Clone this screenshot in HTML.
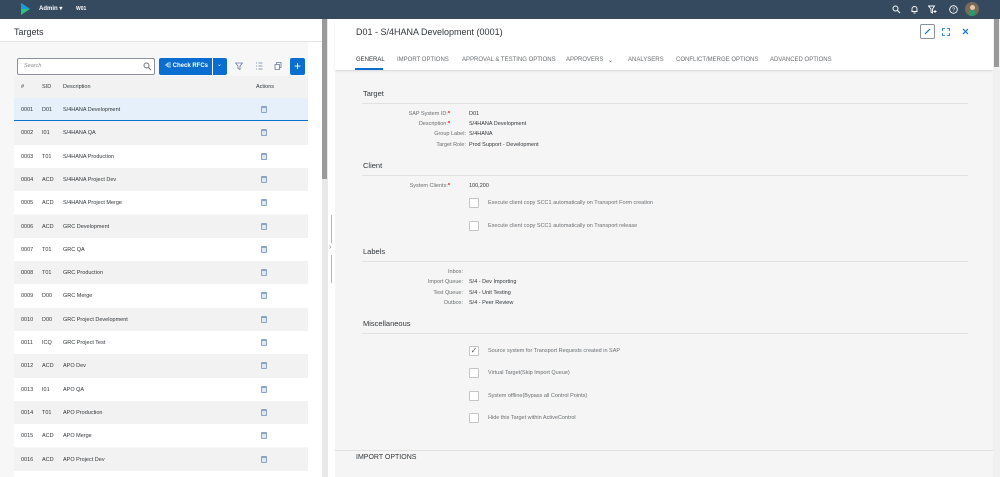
<!DOCTYPE html>
<html><head><meta charset="utf-8"><style>
*{margin:0;padding:0;box-sizing:border-box}
html{width:1000px;height:477px;overflow:hidden}
body{width:1000px;height:477px;overflow:hidden;font-family:"Liberation Sans",sans-serif;background:#f7f7f7;position:relative;color:#32363a}
.a{position:absolute}
.top{left:0;top:0;width:1000px;height:19px;background:#354a5f}
.row{position:absolute;left:14px;width:294px;height:23.3px;font-size:5.5px;color:#32363a}
.row span{position:absolute;top:9px}
.trash{position:absolute;left:247px;top:8px;width:6px;height:7px;border:1px solid #8aa4c4;border-top-width:2px;border-radius:1px;background:#dfe8f2}
.lbl{position:absolute;font-size:5.5px;color:#6a6d70;text-align:right;width:120px;left:330px}
.val{position:absolute;font-size:5.5px;color:#32363a;left:469px}
.sec{position:absolute;left:363px;font-size:7.5px;color:#32363a}
.hr{position:absolute;left:362px;width:606px;height:1px;background:#e1e1e1}
.cb{position:absolute;left:469px;width:10px;height:10px;border:1px solid #c5c5c5;background:#fff;border-radius:1px}
.cbl{position:absolute;left:488px;font-size:5.5px;color:#6a6d70}
.tab{position:absolute;top:57px;font-size:6px;color:#6a6d70;white-space:nowrap}
.ic{position:absolute;top:4px;font-size:8px;color:#fff}
</style></head><body>
<div class="a top"></div>
<svg class="a" style="left:21px;top:3px" width="9" height="12" viewBox="0 0 9 12"><path d="M0 0 L9 6 L0 12Z" fill="#2ec27e"/><path d="M0 0 L9 6 L0 6Z" fill="#1d9bd8"/></svg>
<div class="a" style="left:39px;top:5px;font-size:6px;font-weight:bold;color:#fff">Admin ▾</div>
<div class="a" style="left:76px;top:6px;font-size:5px;font-weight:bold;color:#fff">W01</div>
<svg class="a" style="left:892px;top:5px" width="9" height="9" viewBox="0 0 9 9"><circle cx="3.5" cy="3.5" r="2.5" fill="none" stroke="#fff" stroke-width="1"/><path d="M5.5 5.5L8 8" stroke="#fff"/></svg>
<svg class="a" style="left:910px;top:5px" width="9" height="9" viewBox="0 0 9 9"><path d="M2 6.5V4a2.5 2.5 0 015 0v2.5H1.5h6M3.5 8h2" fill="none" stroke="#fff" stroke-width=".9"/></svg>
<svg class="a" style="left:928px;top:5px" width="9" height="9" viewBox="0 0 9 9"><path d="M.5 1h6L4.5 4v4L3 7V4z" fill="none" stroke="#fff" stroke-width=".9"/><path d="M7 5v3M5.5 6.5h3" stroke="#fff" stroke-width=".9"/></svg>
<svg class="a" style="left:949px;top:5px" width="9" height="9" viewBox="0 0 9 9"><circle cx="4.5" cy="4.5" r="3.8" fill="none" stroke="#fff" stroke-width=".9"/><text x="4.5" y="6.5" font-size="5.5" text-anchor="middle" fill="#fff" font-family="Liberation Sans">?</text></svg>
<div class="a" style="left:965px;top:2px;width:14px;height:14px;border-radius:50%;background:#7a6a5a;overflow:hidden"><div class="a" style="left:4px;top:8px;width:6px;height:6px;background:#2a9a6a;border-radius:2px"></div><div class="a" style="left:4.5px;top:3px;width:5px;height:5px;background:#e8c8a8;border-radius:50%"></div></div>

<!-- left pane -->
<div class="a" style="left:0;top:19px;width:322px;height:23px;background:#fff;border-bottom:1px solid #e5e5e5"></div>
<div class="a" style="left:14px;top:27px;font-size:9px;color:#32363a">Targets</div>
<div class="a" style="left:308px;top:42px;width:14px;height:435px;background:#fff"></div>
<div class="a" style="left:322px;top:19px;width:6px;height:458px;background:#e8e8e8"></div>
<div class="a" style="left:322px;top:19px;width:5px;height:160px;background:#999"></div>
<div class="a" style="left:328px;top:19px;width:7px;height:458px;background:#fff"></div>
<div class="a" style="left:331px;top:215px;width:1px;height:28px;background:#a8b8cc"></div>
<div class="a" style="left:331px;top:255px;width:1px;height:28px;background:#a8b8cc"></div>
<div class="a" style="left:329px;top:244px;font-size:7px;color:#6a7a9a">›</div>

<div class="a" style="left:17px;top:58px;width:138px;height:17px;background:#fff;border:1px solid #89919a;border-radius:2px"></div>
<div class="a" style="left:24px;top:63px;font-size:5.5px;font-style:italic;color:#8a8d90">Search</div>
<svg class="a" style="left:143px;top:62px" width="9" height="9" viewBox="0 0 9 9"><circle cx="3.5" cy="3.5" r="2.5" fill="none" stroke="#6a6d70" stroke-width=".9"/><path d="M5.5 5.5L8 8" stroke="#6a6d70"/></svg>
<div class="a" style="left:159px;top:58px;width:68px;height:17px;background:#0a6ed1;border-radius:2px"></div>
<div class="a" style="left:212px;top:58px;width:1px;height:17px;background:#fff"></div>
<div class="a" style="left:165px;top:62px;font-size:6px;font-weight:bold;color:#fff">⋲ Check RFCs</div>
<div class="a" style="left:217px;top:61px;font-size:6px;color:#fff">⌄</div>
<svg class="a" style="left:235px;top:62px" width="8" height="8" viewBox="0 0 8 8"><path d="M.5 1h7L5 4v3.5L3 6.5V4z" fill="none" stroke="#6a7a9a" stroke-width=".8"/></svg>
<svg class="a" style="left:255px;top:62px" width="8" height="8" viewBox="0 0 8 8"><path d="M1 1h1M1 4h1M1 7h1M3.5 1h4M3.5 4h4M3.5 7h4" stroke="#6a7a9a" stroke-width=".8"/></svg>
<svg class="a" style="left:274px;top:62px" width="8" height="8" viewBox="0 0 8 8"><path d="M1 2.5h4.5V7.5H1z M2.5 2.5V.5H7V5.5H5.5" fill="none" stroke="#6a7a9a" stroke-width=".8"/></svg>
<div class="a" style="left:290px;top:58px;width:15px;height:17px;background:#0a6ed1;border-radius:2px;color:#fff;font-size:12px;text-align:center;line-height:16px">+</div>

<div class="row" style="top:76px;height:22px;background:#f2f2f2"><span style="left:7px;top:8px">#</span><span style="left:28px;top:8px">SID</span><span style="left:49px;top:8px">Description</span><span style="left:242px;top:8px">Actions</span></div>

<div class="row" style="top:98px;background:#e5f0fa;border-bottom:1px solid #0a6ed1"><span style="left:7px">0001</span><span style="left:28px">D01</span><span style="left:49px">S/4HANA Development</span><i class="trash"></i></div>
<div class="row" style="top:121.3px;background:#f2f2f2"><span style="left:7px">0002</span><span style="left:28px">I01</span><span style="left:49px">S/4HANA QA</span><i class="trash"></i></div>
<div class="row" style="top:144.6px;background:#fff"><span style="left:7px">0003</span><span style="left:28px">T01</span><span style="left:49px">S/4HANA Production</span><i class="trash"></i></div>
<div class="row" style="top:167.9px;background:#f2f2f2"><span style="left:7px">0004</span><span style="left:28px">ACD</span><span style="left:49px">S/4HANA Project Dev</span><i class="trash"></i></div>
<div class="row" style="top:191.2px;background:#fff"><span style="left:7px">0005</span><span style="left:28px">ACD</span><span style="left:49px">S/4HANA Project Merge</span><i class="trash"></i></div>
<div class="row" style="top:214.5px;background:#f2f2f2"><span style="left:7px">0006</span><span style="left:28px">ACD</span><span style="left:49px">GRC Development</span><i class="trash"></i></div>
<div class="row" style="top:237.8px;background:#fff"><span style="left:7px">0007</span><span style="left:28px">T01</span><span style="left:49px">GRC QA</span><i class="trash"></i></div>
<div class="row" style="top:261.1px;background:#f2f2f2"><span style="left:7px">0008</span><span style="left:28px">T01</span><span style="left:49px">GRC Production</span><i class="trash"></i></div>
<div class="row" style="top:284.4px;background:#fff"><span style="left:7px">0009</span><span style="left:28px">D00</span><span style="left:49px">GRC Merge</span><i class="trash"></i></div>
<div class="row" style="top:307.7px;background:#f2f2f2"><span style="left:7px">0010</span><span style="left:28px">D00</span><span style="left:49px">GRC Project Development</span><i class="trash"></i></div>
<div class="row" style="top:331px;background:#fff"><span style="left:7px">0011</span><span style="left:28px">ICQ</span><span style="left:49px">GRC Project Test</span><i class="trash"></i></div>
<div class="row" style="top:354.3px;background:#f2f2f2"><span style="left:7px">0012</span><span style="left:28px">ACD</span><span style="left:49px">APO Dev</span><i class="trash"></i></div>
<div class="row" style="top:377.6px;background:#fff"><span style="left:7px">0013</span><span style="left:28px">I01</span><span style="left:49px">APO QA</span><i class="trash"></i></div>
<div class="row" style="top:400.9px;background:#f2f2f2"><span style="left:7px">0014</span><span style="left:28px">T01</span><span style="left:49px">APO Production</span><i class="trash"></i></div>
<div class="row" style="top:424.2px;background:#fff"><span style="left:7px">0015</span><span style="left:28px">ACD</span><span style="left:49px">APO Merge</span><i class="trash"></i></div>
<div class="row" style="top:447.5px;background:#f2f2f2"><span style="left:7px">0016</span><span style="left:28px">ACD</span><span style="left:49px">APO Project Dev</span><i class="trash"></i></div>
<div class="row" style="top:470.8px;height:6.2px;background:#fff"></div>

<!-- right pane -->
<div class="a" style="left:335px;top:19px;width:665px;height:458px;background:#f5f5f5"></div>
<div class="a" style="left:335px;top:19px;width:658px;height:51px;background:#fff;box-shadow:0 1px 2px rgba(0,0,0,.12)"></div>
<div class="a" style="left:993px;top:19px;width:7px;height:458px;background:#f0f0f0"></div>
<div class="a" style="left:994px;top:19px;width:5px;height:48px;background:#999"></div>
<div class="a" style="left:356px;top:27px;font-size:9px;color:#32363a">D01 - S/4HANA Development (0001)</div>
<div class="a" style="left:920px;top:24px;width:15px;height:15px;border:1px solid #89919a;border-radius:2px"></div>
<svg class="a" style="left:924px;top:28px" width="7" height="7" viewBox="0 0 7 7"><path d="M1 6L6 1" stroke="#0a6ed1" stroke-width="1.2"/></svg>
<svg class="a" style="left:942px;top:28px" width="8" height="8" viewBox="0 0 8 8"><path d="M.5 3V.5H3M5 .5h2.5V3M7.5 5v2.5H5M3 7.5H.5V5" fill="none" stroke="#0a6ed1" stroke-width=".8"/></svg>
<svg class="a" style="left:962px;top:28px" width="7" height="7" viewBox="0 0 7 7"><path d="M1 1l5 5M6 1L1 6" stroke="#0a6ed1" stroke-width="1.2"/></svg>
<div class="tab" style="left:356px;color:#32363a">GENERAL</div>
<div class="a" style="left:355px;top:68px;width:28px;height:2px;background:#0a6ed1"></div>
<div class="tab" style="left:397px">IMPORT OPTIONS</div>
<div class="tab" style="left:462px">APPROVAL &amp; TESTING OPTIONS</div>
<div class="tab" style="left:566px">APPROVERS</div>
<div class="tab" style="left:608px">⌄</div>
<div class="tab" style="left:628px">ANALYSERS</div>
<div class="tab" style="left:676px">CONFLICT/MERGE OPTIONS</div>
<div class="tab" style="left:770px">ADVANCED OPTIONS</div>

<div class="sec" style="top:89px">Target</div><div class="hr" style="top:103px"></div>
<div class="lbl" style="top:111px">SAP System ID:<b style="color:#e00">*</b></div><div class="val" style="top:111px">D01</div>
<div class="lbl" style="top:121px">Description:<b style="color:#e00">*</b></div><div class="val" style="top:121px">S/4HANA Development</div>
<div class="lbl" style="top:131px;width:136px">Group Label:</div><div class="val" style="top:131px">S/4HANA</div>
<div class="lbl" style="top:142px;width:136px">Target Role:</div><div class="val" style="top:142px">Prod Support - Development</div>

<div class="sec" style="top:161px">Client</div><div class="hr" style="top:175px"></div>
<div class="lbl" style="top:183px">System Clients:<b style="color:#e00">*</b></div><div class="val" style="top:183px">100,200</div>
<div class="cb" style="top:198px"></div><div class="cbl" style="top:200px">Execute client copy SCC1 automatically on Transport Form creation</div>
<div class="cb" style="top:221px"></div><div class="cbl" style="top:223px">Execute client copy SCC1 automatically on Transport release</div>

<div class="sec" style="top:247px">Labels</div><div class="hr" style="top:261px"></div>
<div class="lbl" style="top:269px;width:133px">Inbox:</div>
<div class="lbl" style="top:279px;width:133px">Import Queue:</div><div class="val" style="top:279px">S/4 - Dev Importing</div>
<div class="lbl" style="top:290px;width:133px">Test Queue:</div><div class="val" style="top:290px">S/4 - Unit Testing</div>
<div class="lbl" style="top:300px;width:133px">Outbox:</div><div class="val" style="top:300px">S/4 - Peer Review</div>

<div class="sec" style="top:319px">Miscellaneous</div><div class="hr" style="top:333px"></div>
<div class="cb" style="top:346px;font-size:8px;line-height:8px;text-align:center;color:#555">✓</div><div class="cbl" style="top:348px">Source system for Transport Requests created in SAP</div>
<div class="cb" style="top:368px"></div><div class="cbl" style="top:370px">Virtual Target(Skip Import Queue)</div>
<div class="cb" style="top:391px"></div><div class="cbl" style="top:393px">System offline(Bypass all Control Points)</div>
<div class="cb" style="top:413px"></div><div class="cbl" style="top:415px">Hide this Target within ActiveControl</div>

<div class="a" style="left:335px;top:450px;width:658px;height:1px;background:#e1e1e1"></div>
<div class="a" style="left:356px;top:454px;font-size:7px;color:#32363a">IMPORT OPTIONS</div>
</body></html>
